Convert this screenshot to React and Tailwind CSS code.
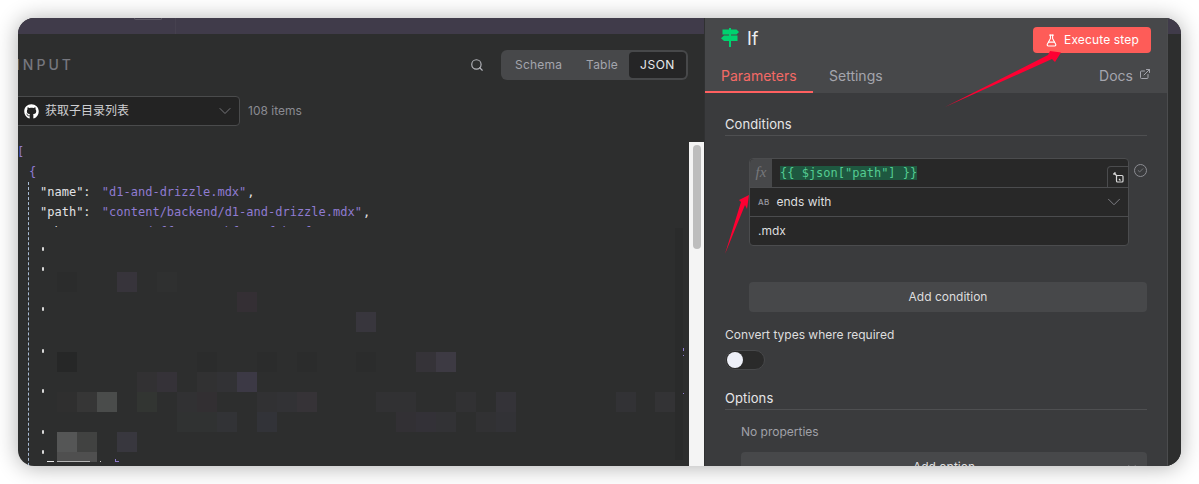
import React from "react";
import { Search, ChevronDown, FlaskConical, ExternalLink, Check } from "lucide-react";
import { FaGithub } from "react-icons/fa";

const mono = "font-['DejaVu_Sans_Mono','Liberation_Mono',monospace]";

// mosaic blocks that hide part of the JSON: [x, y, colour] in page coordinates
const blocks = [
  [57, 272, "#2b2c2c"], [117, 272, "#37343b"], [157, 272, "#2f3030"],
  [237, 292, "#342f34"], [356, 312, "#38363d"],
  [57, 352, "#262727"], [197, 352, "#2b2c2c"], [257, 352, "#2b2c2c"], [297, 352, "#2b2c2c"], [356, 352, "#2b2c2c"], [416, 352, "#353338"], [436, 352, "#3d3a43"],
  [137, 372, "#323133"], [157, 372, "#353238"], [197, 372, "#313132"], [217, 372, "#323235"], [237, 372, "#3c3945"],
  [57, 392, "#2f2f2f"], [77, 392, "#363636"], [97, 392, "#4a4c4b"], [137, 392, "#323532"], [177, 392, "#313133"], [197, 392, "#322f32"], [257, 392, "#313133"], [277, 392, "#323235"], [297, 392, "#363337"], [376, 392, "#313133"], [396, 392, "#313133"], [456, 392, "#313133"], [496, 392, "#343338"], [616, 392, "#323235"], [655, 392, "#333335"],
  [177, 412, "#303232"], [197, 412, "#303232"], [217, 412, "#323336"], [257, 412, "#323338"], [396, 412, "#323034"], [416, 412, "#333137"], [436, 412, "#323235"], [476, 412, "#313133"], [496, 412, "#323236"],
  [57, 432, "#555656"], [77, 432, "#414241"], [117, 432, "#38373e"],
];
const commaYs = [249, 269, 309, 351, 391, 432, 452];

function Arrows() {
  return (
    <svg className="absolute left-0 top-0 pointer-events-none" width="1163" height="448" viewBox="18 18 1163 448">
      <polygon points="945,107 1048,55 1050,51 1061,52.5 1055,62 1052,59" fill="#fe0032" />
      <polygon points="725,254 741,202 739,200 749,195 747,209 745,205" fill="#fe0032" />
    </svg>
  );
}

function SignIcon() {
  return (
    <svg width="18" height="20" viewBox="0 0 18 20" fill="#00d26f" className="-mt-[4px]">
      <rect x="8" y="0" width="2" height="19" />
      <path d="M1.5 1.5h14l2.5 2.5-2.5 2.5h-14z" />
      <path d="M3 7.5h13.5v5.5H3L0 10.2z" />
    </svg>
  );
}

function PopIcon() {
  return (
    <svg width="11" height="11" viewBox="0 0 11 11" fill="none" stroke="#d8d8d8" strokeWidth="1.2">
      <path d="M1 1l3 3" />
      <path d="M1 1h2M1 1v2" />
      <rect x="3.5" y="3.5" width="6.5" height="6.5" rx="1" />
      <path d="M6 7l1.5 1.5" />
    </svg>
  );
}

function JsonLine({ k, v }) {
  return (
    <div className="h-5 leading-5 whitespace-pre -ml-px">
      <span className="text-[#e3e3e6]">"{k}":</span>
      <span className="text-[#8f7bd1] ml-1"> {v}</span>
      <span className="text-[#e3e3e6] ml-px">,</span>
    </div>
  );
}

export default function App() {
  return (
    <div className="w-[1199px] h-[484px] bg-white p-[18px] font-['Inter','Noto_Sans_CJK_SC',sans-serif] overflow-hidden">
      <div className="relative w-[1163px] h-[448px] rounded-2xl overflow-hidden flex shadow-[0_1px_22px_rgba(0,0,0,0.32)] bg-[#2d2e2e]">
        {/* Input column */}
        <div className="w-[686px] h-full flex flex-col shrink-0">
          <div className="h-4 bg-[#403b4a] shrink-0 flex">
            <div className="ml-[116px] w-7 h-[2px] border border-t-0 border-[#5e5a66] rounded-b-sm" />
            <div className="ml-[13px] w-px h-full bg-[#46414f]" />
          </div>
          <div className="flex items-center justify-between pr-4 mt-4 h-[30px] shrink-0">
            <div className="-ml-[2px] text-sm font-medium tracking-[3px] text-[#76777e]">INPUT</div>
            <div className="flex items-center">
              <Search size={14} className="text-[#b4b5bb] mr-[17px]" />
              <div className="w-[187px] h-[30px] rounded-md bg-[#47484a] flex items-center p-[2px] text-xs text-[#a4a5ad]">
                <span className="ml-3 tracking-[0.2px]">Schema</span>
                <span className="ml-6 tracking-[0.2px]">Table</span>
                <span className="ml-auto w-[57px] h-[26px] rounded bg-[#252526] text-[#e9e9ec] flex items-center justify-center tracking-[0.5px]">JSON</span>
              </div>
            </div>
          </div>
          <div className="flex items-center mt-4 h-[30px] shrink-0">
            <div className="-ml-px w-[223px] h-[30px] rounded-r bg-[#232323] border border-[#4a4b4c] flex items-center pl-[6px] pr-1">
              <FaGithub size={15} className="text-white" />
              <span className="ml-[6px] text-xs text-[#cfcfd2]">获取子目录列表</span>
              <ChevronDown size={20} strokeWidth={1} className="ml-auto text-[#85868c]" />
            </div>
            <span className="ml-2 text-xs text-[#8a8b92]">108 items</span>
          </div>
          <div className="relative flex-1 mt-4 flex min-h-0">
            <div className={`flex-1 min-w-0 overflow-hidden ${mono} text-xs`}>
              <div className="h-5 leading-5 text-[#8f7bd1] -ml-px">[</div>
              <div className="h-5 leading-5 text-[#8f7bd1] ml-[11px]">{"{"}</div>
              <div className="ml-[10px] pl-3 h-full border-l border-dashed border-[#a9bcd4]">
                <JsonLine k="name" v={'"d1-and-drizzle.mdx"'} />
                <JsonLine k="path" v={'"content/backend/d1-and-drizzle.mdx"'} />
                <div className="h-[5px] overflow-hidden -ml-px">
                  <div className="h-5 leading-5 whitespace-pre">
                    <span className="text-[#e3e3e6]">"sha":</span>
                    <span className="text-[#8f7bd1] ml-1"> "4ac472d0ff32-0377bf1145f5b-5f820049-6-88"</span>
                  </div>
                </div>
              </div>
            </div>
            <div className="w-[15px] bg-[#f4f4f4] shrink-0 pl-1 pt-[3px]">
              <div className="w-2 h-[104px] rounded-full bg-[#bdbdbd]" />
            </div>
          </div>
        </div>

        {/* Parameters panel */}
        <div className="w-[464px] h-full shrink-0 flex flex-col bg-[#3a3b3d] border-l border-[#303132] border-r border-r-[#4b4c4e]">
          <div className="bg-[#47484a] h-[75px] shrink-0 flex flex-col">
            <div className="flex items-center pl-4 pr-4 h-[44px]">
              <SignIcon />
              <span className="ml-2 -mt-[2px] text-lg text-[#ededf0]">If</span>
              <button className="ml-auto w-[118px] h-[26px] rounded bg-[#fe5c58] text-xs tracking-[0.15px] text-white flex items-center justify-center gap-[6px]">
                <FlaskConical size={13} />
                Execute step
              </button>
            </div>
            <div className="flex items-end h-[31px] text-sm">
              <div className="w-[108px] h-full border-b-2 border-[#ff6060] text-[#f46a66] pl-4 pt-[4px]">Parameters</div>
              <div className="ml-4 h-full text-[#a4a5ad] pt-[4px]">Settings</div>
              <div className="ml-auto h-full pr-4 pt-[4px] flex items-start gap-[6px] text-[#a4a5ad]">
                Docs
                <ExternalLink size={12} className="mt-[2px]" />
              </div>
            </div>
          </div>
          <div className="px-5 flex-1 flex flex-col min-h-0">
            <div className="mt-[21px] h-5 pb-px box-content border-b border-[#4e4f51] text-[13px] tracking-[0.1px] leading-5 text-[#e6e6e8]">Conditions</div>
            <div className="ml-6 mt-[22px] flex">
              <div className="relative w-[380px] h-[88px] rounded border border-[#4b4c4e] bg-[#282828] flex flex-col shrink-0 text-xs text-[#dededf]">
                <div className="h-7 flex border-b-0">
                  <div className="w-[22px] h-7 bg-[#47484a] rounded-tl flex items-center justify-center font-['Liberation_Serif',serif] italic text-[15px] text-[#77787c]">fx</div>
                  <div className={`ml-2 mt-[7px] h-[14px] leading-[14px] bg-[#1e5840] text-[#54cc92] text-xs whitespace-pre ${mono}`}>{'{{ $json["path"] }}'}</div>
                </div>
                <div className="h-[29px] border-t border-[#4b4c4e] flex items-center pl-2 pr-[3px]">
                  <span className="text-[8px] font-medium tracking-[0.3px] text-[#9a9ba2]">AB</span>
                  <span className="ml-[7px]">ends with</span>
                  <ChevronDown size={22} strokeWidth={1} className="ml-auto text-[#85868c]" />
                </div>
                <div className="h-[29px] border-t border-[#4b4c4e] flex items-center pl-2">.mdx</div>
                <div className="absolute right-[-1px] top-[7px] w-[22px] h-[21px] bg-[#282828] border border-[#4b4c4e] border-b-0 rounded-tl flex items-center justify-center">
                  <PopIcon />
                </div>
              </div>
              <div className="ml-[5px] mt-[6px] w-[13px] h-[13px] rounded-full border border-[#8b8c92] flex items-center justify-center">
                <Check size={7} strokeWidth={2.5} className="text-[#8b8c92]" />
              </div>
            </div>
            <div className="ml-6 mt-9 h-[30px] rounded bg-[#47484a] flex items-center justify-center text-xs text-[#dededf] shrink-0">Add condition</div>
            <div className="mt-[14px] h-[18px] leading-[18px] text-xs text-[#dededf] shrink-0">Convert types where required</div>
            <div className="mt-[6px] w-10 h-5 rounded-full bg-[#2a2a2a] border border-[#47484a] flex items-center pl-px shrink-0">
              <div className="w-4 h-4 rounded-full bg-[#eef0f8]" />
            </div>
            <div className="mt-[18px] h-5 leading-5 pb-[1px] box-content border-b border-[#4e4f51] text-[13px] tracking-[0.1px] text-[#e6e6e8] shrink-0">Options</div>
            <div className="ml-4 mt-[12px] h-5 leading-5 text-xs text-[#a0a1a8] shrink-0">No properties</div>
            <div className="relative ml-4 mt-[10px] h-[30px] rounded bg-[#47484a] flex items-center justify-center text-xs text-[#dededf] shrink-0">
              Add option
              <ChevronDown size={14} strokeWidth={1.3} className="absolute right-2 top-2 text-[#85868c]" />
            </div>
          </div>
        </div>

        {/* Right edge strip */}
        <div className="flex-1 flex flex-col">
          <div className="h-4 bg-[#403b4a]" />
          <div className="flex-1 bg-[#2d2e2e]" />
        </div>

        {/* Mosaic over the JSON */}
        <div className="absolute left-[657px] top-[210px] w-2 h-[232px] bg-[#2a2b2b]" />
        {blocks.map(([x, y, c], i) => (
          <div key={i} className="absolute w-5 h-5" style={{ left: x - 18, top: y - 18, background: c }} />
        ))}
        <div className="absolute left-[39px] top-[434px] w-10 h-[10px] bg-[#4f4f4f]" />
        {commaYs.map((y) => (
          <div key={y} className="absolute left-[24px] w-[2px] h-1 rounded-sm bg-[#d8d8d8]" style={{ top: y - 20 }} />
        ))}
        <div className="absolute left-[29px] top-[443px] w-[7px] h-px bg-[#e8e8e8]" />
        <div className="absolute left-[39px] top-[443px] w-[33px] h-px bg-[#b5b5b5]" />
        <div className="absolute left-[82px] top-[443px] w-px h-px bg-[#d0d0d0]" />
        <div className="absolute left-[97px] top-[441px] w-[4px] h-[3px] border-l border-b border-[#8f7bd1]" />
        <div className="absolute left-[665px] top-[330px] w-px h-[3px] bg-[#8f7bd1]" />
        <div className="absolute left-[665px] top-[337px] w-px h-px bg-[#8f7bd1]" />
        <div className="absolute left-[665px] top-[375px] w-px h-px bg-[#8f7bd1]" />

        <Arrows />
      </div>
    </div>
  );
}
